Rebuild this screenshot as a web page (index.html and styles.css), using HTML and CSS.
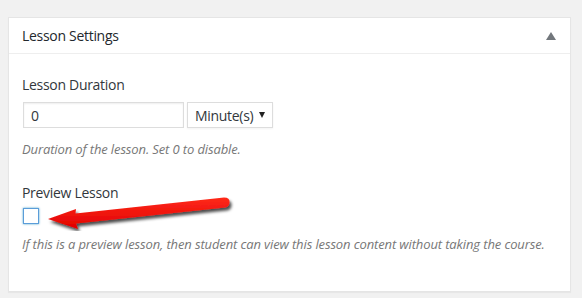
FILE: index.html
```html
<!DOCTYPE html>
<html lang="en">
<head>
  <meta charset="UTF-8">
  <title>Lesson Settings</title>
  <link rel="stylesheet" href="styles.css">
</head>
<body>
  <div class="postbox">
    <div class="postbox-header">
      <h2 class="hndle">Lesson Settings</h2>
      <span class="toggle-indicator"></span>
    </div>

    <div class="inside">
      <div class="field">
        <label class="field-label">Lesson Duration</label>
        <div class="field-row">
          <input type="text" class="duration-input" value="0">
          <div class="select-box">
            <span>Minute(s)</span>
            <span class="select-caret"></span>
          </div>
        </div>
        <p class="description">Duration of the lesson. Set 0 to disable.</p>
      </div>

      <div class="field">
        <label class="field-label">Preview Lesson</label>
        <div class="field-row">
          <span class="checkbox"></span>
        </div>
        <p class="description">If this is a preview lesson, then student can view this lesson content without taking the course.</p>
      </div>
    </div>
  </div>

  <!-- annotation arrow drawn over the screenshot -->
  <svg class="arrow" width="200" height="50" viewBox="0 0 200 50">
    <defs>
      <linearGradient id="redfill" x1="0" y1="0" x2="0" y2="1">
        <stop offset="0" stop-color="#ff2a1a"/>
        <stop offset="1" stop-color="#e00000"/>
      </linearGradient>
      <filter id="shade" x="-10%" y="-30%" width="130%" height="180%">
        <feDropShadow dx="2" dy="3" stdDeviation="1.6" flood-color="#000" flood-opacity="0.7"/>
      </filter>
    </defs>
    <path d="M8 38 L36 28 L35.5 32.5 L184 16.5 Q190 16.5 189.5 21.5 Q189 26 185 26.5 L36 42.5 L38 48 Z" fill="url(#redfill)" filter="url(#shade)"/>
  </svg>
</body>
</html>
```

FILE: styles.css
```css
body {
  margin: 0;
  padding: 17px 11px 8px 8px;
  background-color: #f1f1f1;
  font-family: "Open Sans", "Noto Sans", sans-serif;
  color: #23282d;
  position: relative;
}

.postbox {
  background: #fff;
  border: 1px solid #e5e5e5;
  box-shadow: 0 1px 1px rgba(0, 0, 0, 0.04);
}

.postbox-header {
  display: flex;
  align-items: center;
  justify-content: space-between;
  height: 35px;
  padding: 0 12px 0 13px;
  border-bottom: 1px solid #eee;
}

.hndle {
  margin: 0;
  font-size: 14px;
  font-weight: 400;
  color: #23282d;
  letter-spacing: -0.3px;
}

.toggle-indicator {
  width: 0;
  height: 0;
  border-left: 5px solid transparent;
  border-right: 5px solid transparent;
  border-bottom: 8px solid #72777c;
  margin-right: 2px;
}

.inside {
  padding: 22px 13px 38px 13px;
}

.field {
  margin-bottom: 26px;
}

.field:last-child {
  margin-bottom: 0;
}

.field-label {
  display: block;
  font-size: 14px;
  color: #32373c;
  line-height: 18px;
  letter-spacing: -0.3px;
  margin-bottom: 8px;
}

.field-row {
  display: flex;
  gap: 3px;
}

.duration-input {
  width: 161px;
  height: 26px;
  box-sizing: border-box;
  margin: 0 0 0 1px;
  padding: 0 7px;
  border: 1px solid #ddd;
  box-shadow: inset 0 1px 2px rgba(0, 0, 0, 0.07);
  font-family: inherit;
  font-size: 14px;
  color: #32373c;
  outline: none;
}

.select-box {
  width: 86px;
  height: 26px;
  box-sizing: border-box;
  border: 1px solid #ddd;
  box-shadow: 0 1px 2px rgba(0, 0, 0, 0.05);
  display: flex;
  align-items: center;
  justify-content: space-between;
  padding: 0 7px 0 7px;
  font-size: 14px;
  color: #32373c;
  letter-spacing: -0.3px;
}

.select-caret {
  width: 0;
  height: 0;
  border-left: 3.5px solid transparent;
  border-right: 3.5px solid transparent;
  border-top: 6px solid #222;
}

.description {
  margin: 12px 0 0 0;
  font-size: 13px;
  font-style: italic;
  color: #777;
  letter-spacing: -0.12px;
}

.checkbox {
  display: block;
  width: 16px;
  height: 16px;
  box-sizing: border-box;
  margin: -2px 0 -1px 1px;
  border: 1px solid #5b9dd9;
  box-shadow: 0 0 2px rgba(30, 140, 190, 0.8);
  background: #fff;
}

.arrow {
  position: absolute;
  left: 40px;
  top: 181px;
}
```
